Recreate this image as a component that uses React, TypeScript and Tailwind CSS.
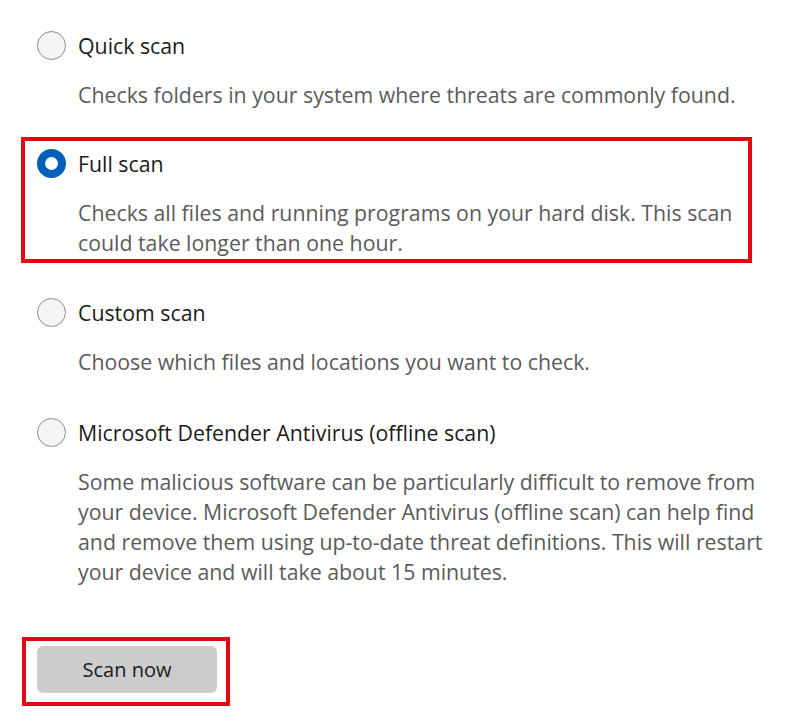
import React from 'react';

interface ScanOption {
  id: string;
  label: string;
  lines: string[];
}

const OPTIONS: ScanOption[] = [
  {
    id: 'quick',
    label: 'Quick scan',
    lines: ['Checks folders in your system where threats are commonly found.'],
  },
  {
    id: 'full',
    label: 'Full scan',
    lines: [
      'Checks all files and running programs on your hard disk. This scan',
      'could take longer than one hour.',
    ],
  },
  {
    id: 'custom',
    label: 'Custom scan',
    lines: ['Choose which files and locations you want to check.'],
  },
  {
    id: 'offline',
    label: 'Microsoft Defender Antivirus (offline scan)',
    lines: [
      'Some malicious software can be particularly difficult to remove from',
      'your device. Microsoft Defender Antivirus (offline scan) can help find',
      'and remove them using up-to-date threat definitions. This will restart',
      'your device and will take about 15 minutes.',
    ],
  },
];

function Radio({ checked }: { checked: boolean }) {
  if (checked) {
    return (
      <span className="flex h-[29px] w-[29px] shrink-0 items-center justify-center rounded-full bg-[#005fb8]">
        <span className="h-[13px] w-[13px] rounded-full bg-white" />
      </span>
    );
  }
  return <span className="h-[29px] w-[29px] shrink-0 rounded-full border border-[#8b8b8b] bg-[#f5f5f5]" />;
}

function Option({ option, checked }: { option: ScanOption; checked: boolean }) {
  return (
    <div>
      <div className="flex h-[30px] items-center gap-[12px]">
        <Radio checked={checked} />
        <span className="pt-[2px] text-[#1b1b1b]">{option.label}</span>
      </div>
      <p className="mt-[20px] pl-[41px] text-[#5b5b5b] whitespace-nowrap">
        {option.lines.map((line, i) => (
          <React.Fragment key={i}>
            {i > 0 && <br />}
            {line}
          </React.Fragment>
        ))}
      </p>
    </div>
  );
}

export default function App() {
  const selected = 'full';
  return (
    <div
      className="h-[722px] w-[797px] overflow-hidden bg-white pl-[37px] pt-[30px] text-[21.3px] leading-[30px]"
      style={{ fontFamily: '"Segoe UI", "Open Sans", sans-serif' }}
    >
      <Option option={OPTIONS[0]} checked={false} />

      {/* highlighted option */}
      <div className="-ml-[16px] mt-[27px] w-[731px] border-4 border-[#e30613] pb-[1px] pl-[12px] pt-[7px]">
        <Option option={OPTIONS[1]} checked={selected === 'full'} />
      </div>

      <div className="mt-[34px]">
        <Option option={OPTIONS[2]} checked={false} />
      </div>
      <div className="mt-[40px]">
        <Option option={OPTIONS[3]} checked={false} />
      </div>

      <div className="-ml-[15px] mt-[50px] w-[208px] border-4 border-[#e30613] pb-[9px] pl-[11px] pt-[5px]">
        <button className="flex h-[47px] w-[180px] items-center justify-center rounded-[6px] bg-[#cccccc] text-[20px] text-[#1b1b1b]">
          Scan now
        </button>
      </div>
    </div>
  );
}
